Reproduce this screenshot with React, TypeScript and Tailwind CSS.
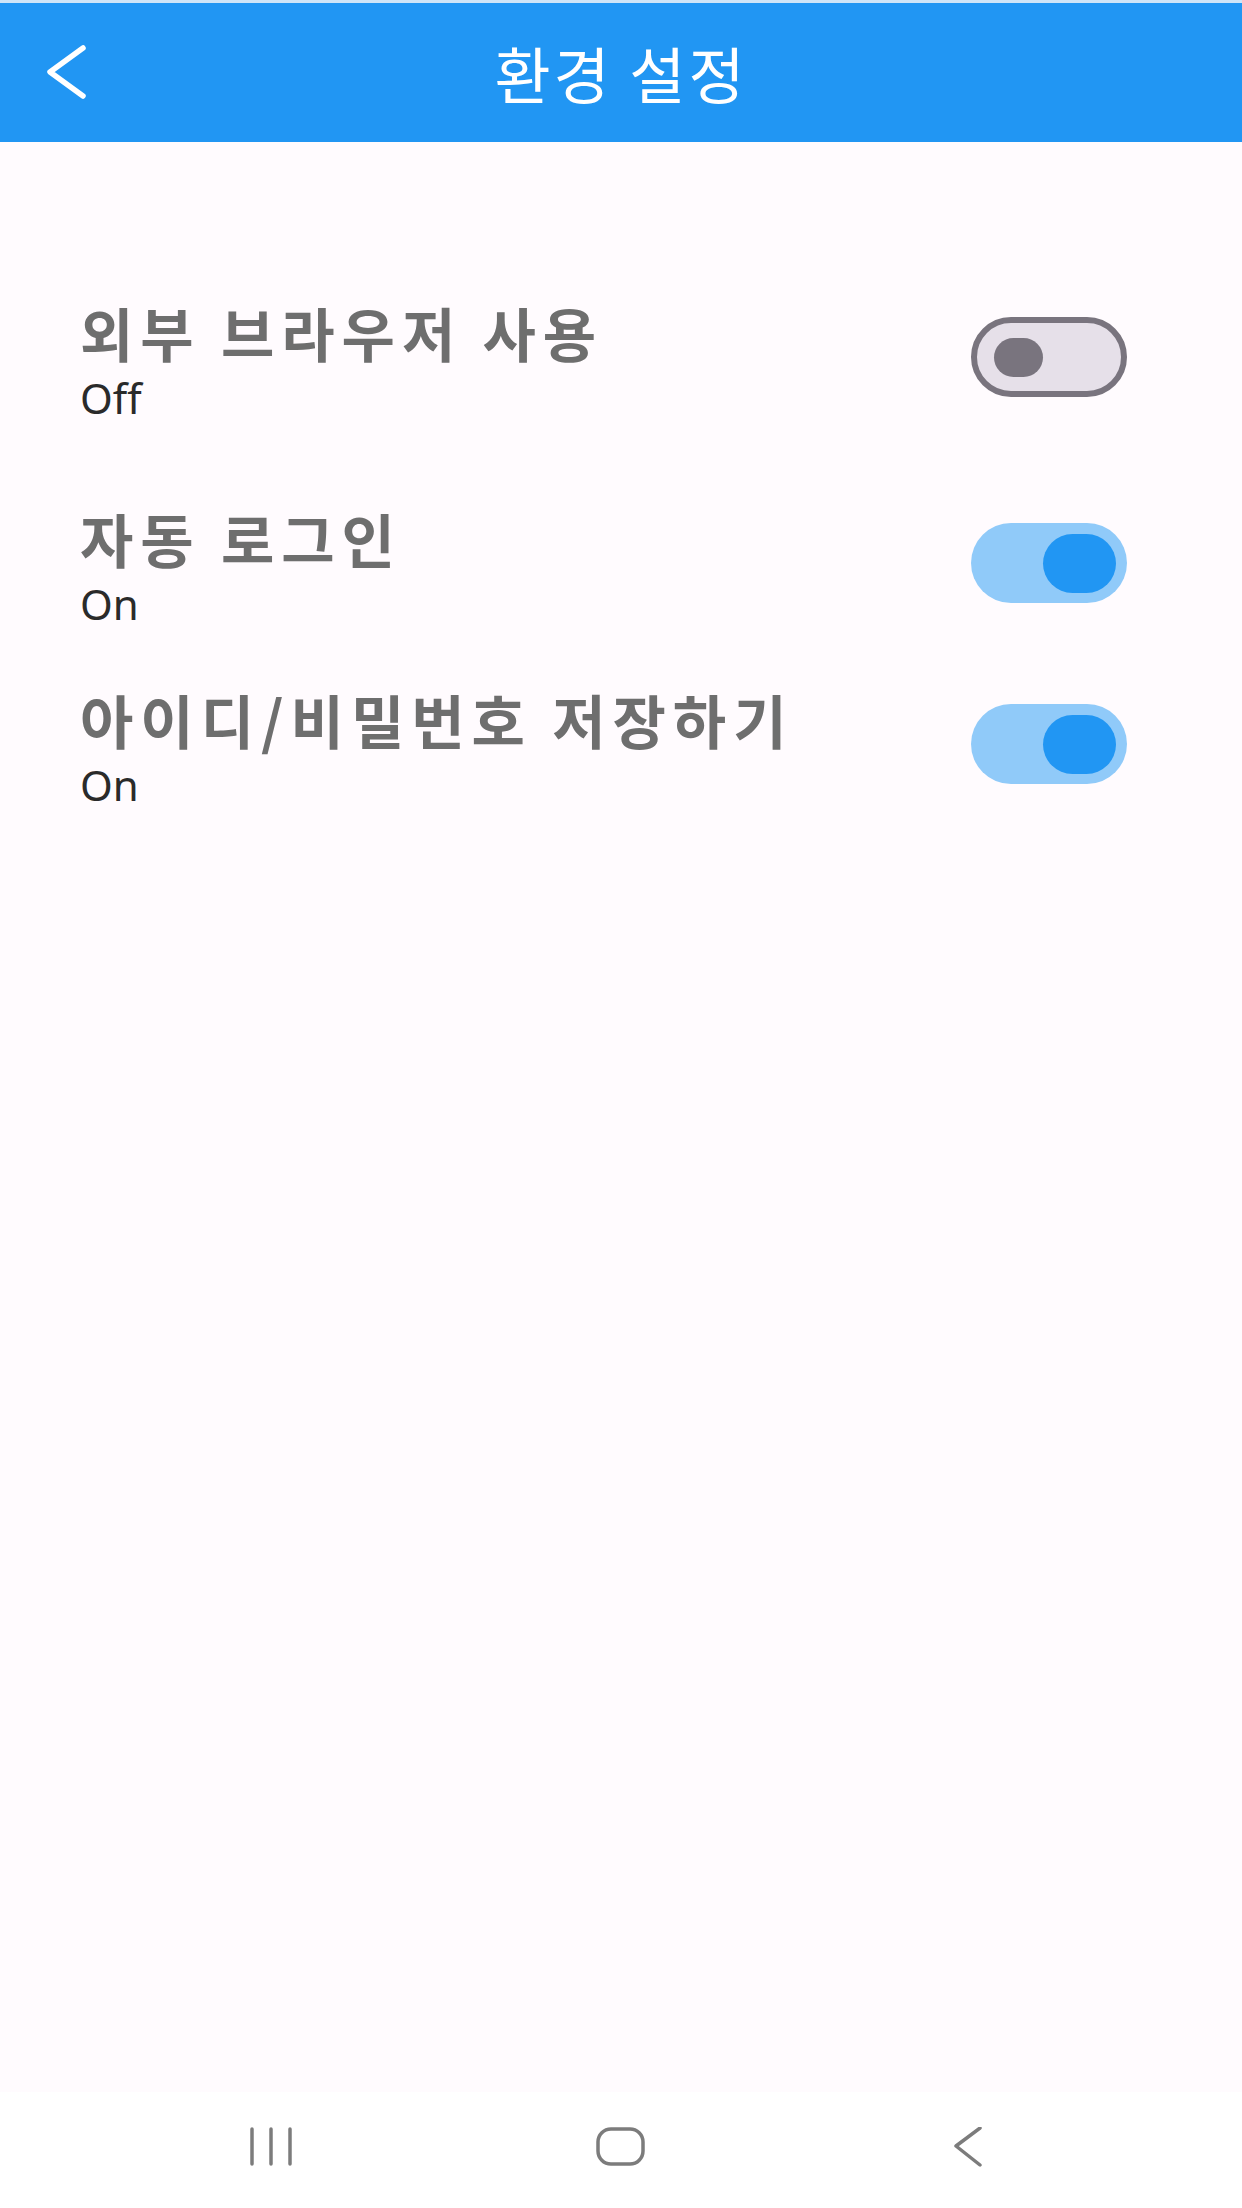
import React from "react";

interface SettingItem {
    title: string;
    on: boolean;
    gapTop: string;
}

const settings: SettingItem[] = [
    { title: "외부 브라우저 사용", on: false, gapTop: "mt-[161px]" },
    { title: "자동 로그인", on: true, gapTop: "mt-[90px]" },
    { title: "아이디/비밀번호 저장하기", on: true, gapTop: "mt-[65px]" },
];

function Toggle({ on }: { on: boolean }) {
    if (on) {
        return (
            <div className="flex h-[80px] w-[156px] shrink-0 items-center justify-end rounded-full bg-[#90caf9] pr-[11px]">
                <div className="h-[59px] w-[73px] rounded-full bg-[#2196f3]" />
            </div>
        );
    }
    return (
        <div className="flex h-[80px] w-[156px] shrink-0 items-center rounded-full border-[6px] border-[#79747e] bg-[#e6e0e9] pl-[17px]">
            <div className="h-[39px] w-[49px] rounded-full bg-[#79747e]" />
        </div>
    );
}

export default function App() {
    return (
        <div className="flex h-[2208px] w-[1242px] flex-col bg-[#fffbfe] font-['Noto_Sans_CJK_KR',sans-serif]">
            {/* app bar */}
            <div className="h-[3px] bg-[#cfe5f8]" />
            <div className="relative flex h-[139px] items-center justify-center bg-[#2196f3]">
                <button className="absolute left-[40px] top-[34px] flex h-[70px] w-[52px] items-center justify-center">
                    <svg width="52" height="70" viewBox="0 0 52 70" fill="none">
                        <polyline points="43,11 10,35 43,59" stroke="#ffffff" strokeWidth="5.5" strokeLinecap="round" strokeLinejoin="round" />
                    </svg>
                </button>
                <h1 className="text-[61px] leading-none font-normal tracking-[3px] text-white">환경 설정</h1>
            </div>

            {/* settings list */}
            <div className="flex flex-1 flex-col pl-[80px] pr-[115px]">
                {settings.map((item, index) => (
                    <div key={index} className={`flex items-start justify-between ${item.gapTop}`}>
                        <div className="flex flex-col">
                            <span className="text-[58px] leading-none font-bold tracking-[7px] text-[#6e6e6e]">{item.title}</span>
                            <span className="mt-[16px] font-['Noto_Sans',sans-serif] text-[42px] leading-none text-[#2a2a2a]">{item.on ? "On" : "Off"}</span>
                        </div>
                        <div className="mt-[14px]">
                            <Toggle on={item.on} />
                        </div>
                    </div>
                ))}
            </div>

            {/* system nav bar */}
            <div className="flex h-[116px] items-start bg-white pl-[250px] pt-[35px]">
                <svg width="44" height="40" viewBox="0 0 44 40" fill="none">
                    <line x1="2" y1="2" x2="2" y2="37" stroke="#7c7c7c" strokeWidth="3.5" strokeLinecap="round" />
                    <line x1="21" y1="2" x2="21" y2="37" stroke="#7c7c7c" strokeWidth="3.5" strokeLinecap="round" />
                    <line x1="40" y1="2" x2="40" y2="37" stroke="#7c7c7c" strokeWidth="3.5" strokeLinecap="round" />
                </svg>
                <svg className="ml-[302px]" width="50" height="40" viewBox="0 0 50 40" fill="none">
                    <rect x="2" y="2" width="45" height="35" rx="13" stroke="#7c7c7c" strokeWidth="3.5" />
                </svg>
                <svg className="ml-[308px]" width="30" height="40" viewBox="0 0 30 40" fill="none">
                    <polyline points="26,1 2,19 26,38" stroke="#7c7c7c" strokeWidth="3.5" strokeLinecap="round" strokeLinejoin="round" />
                </svg>
            </div>
        </div>
    );
}
